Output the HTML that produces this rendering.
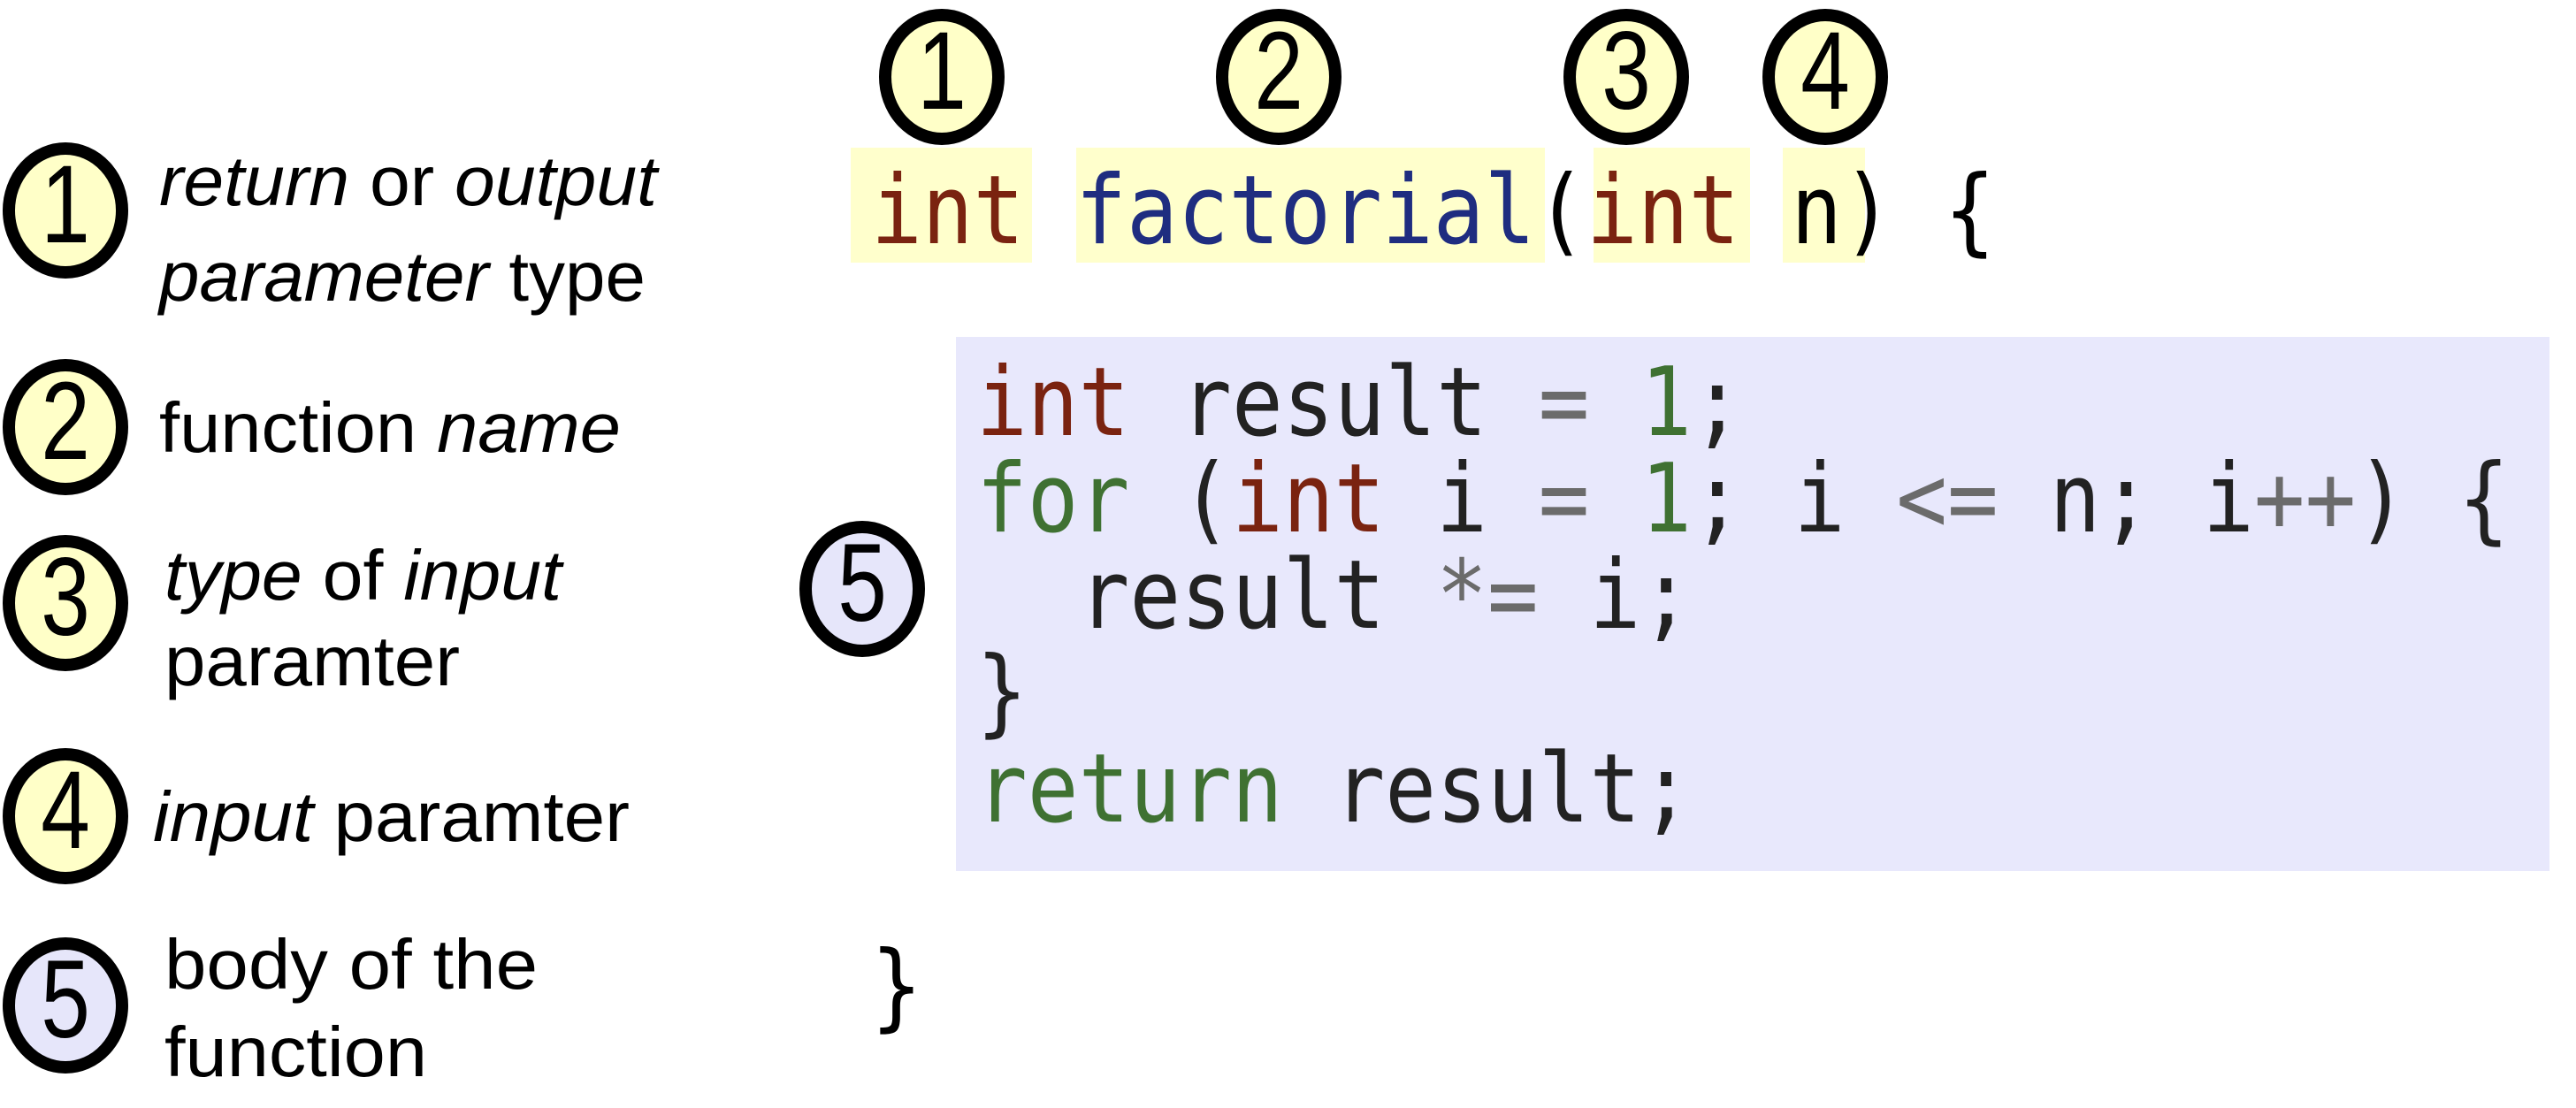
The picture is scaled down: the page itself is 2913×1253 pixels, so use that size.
<!DOCTYPE html>
<html><head><meta charset="utf-8"><style>
html,body{margin:0;padding:0;background:#fff;width:2913px;height:1253px;overflow:hidden}
svg{display:block}
.s{font-family:"Liberation Sans",Arial,sans-serif;font-size:80px;fill:#000}
.d{font-family:"Liberation Sans",Arial,sans-serif;font-size:100px;fill:#000;text-anchor:middle}
.m{font-family:"DejaVu Sans Mono","Liberation Mono",monospace;font-size:96px;white-space:pre}
.k{fill:#7a2310}.f{fill:#1f2d80}.g{fill:#3f7132}.o{fill:#6b6b6b}.t{fill:#222}.b{fill:#000}
</style></head><body>
<svg width="2913" height="1253" viewBox="0 0 2913 1253" xmlns="http://www.w3.org/2000/svg">
<rect x="962" y="167" width="205" height="130" fill="#ffffcc"/>
<rect x="1217" y="167" width="530" height="130" fill="#ffffcc"/>
<rect x="1802" y="167" width="177" height="130" fill="#ffffcc"/>
<rect x="2016" y="167" width="93" height="130" fill="#ffffcc"/>
<rect x="1081" y="381" width="1802" height="604" fill="#e8e8fc"/>

<g stroke="#000" stroke-width="14" fill="#ffffc8">
<ellipse cx="1065" cy="87" rx="64" ry="70"/>
<ellipse cx="1446" cy="87" rx="64" ry="70"/>
<ellipse cx="1839" cy="87" rx="64" ry="70"/>
<ellipse cx="2064" cy="87" rx="64" ry="70"/>
<ellipse cx="74" cy="238" rx="64" ry="70"/>
<ellipse cx="74" cy="483" rx="64" ry="70"/>
<ellipse cx="74" cy="682" rx="64" ry="70"/>
<ellipse cx="74" cy="923" rx="64" ry="70"/>
<ellipse cx="74" cy="1137" rx="64" ry="70" fill="#e6e6fa"/>
<ellipse cx="975" cy="666" rx="64" ry="70" fill="#e6e6fa"/>
</g>
<g class="d">
<text transform="translate(1065,123) scale(1,1.25)">1</text>
<text transform="translate(1446,123) scale(1,1.25)">2</text>
<text transform="translate(1839,123) scale(1,1.25)">3</text>
<text transform="translate(2064,123) scale(1,1.25)">4</text>
<text transform="translate(74,274) scale(1,1.25)">1</text>
<text transform="translate(74,519) scale(1,1.25)">2</text>
<text transform="translate(74,718) scale(1,1.25)">3</text>
<text transform="translate(74,959) scale(1,1.25)">4</text>
<text transform="translate(74,1173) scale(1,1.25)">5</text>
<text transform="translate(975,702) scale(1,1.25)">5</text>
</g>

<text class="s" x="180" y="232" textLength="563" lengthAdjust="spacingAndGlyphs"><tspan font-style="italic">return</tspan> or <tspan font-style="italic">output</tspan></text>
<text class="s" x="180" y="340" textLength="550" lengthAdjust="spacingAndGlyphs"><tspan font-style="italic">parameter</tspan> type</text>
<text class="s" x="180" y="511" textLength="522" lengthAdjust="spacingAndGlyphs">function <tspan font-style="italic">name</tspan></text>
<text class="s" x="186" y="678" textLength="449" lengthAdjust="spacingAndGlyphs"><tspan font-style="italic">type</tspan> of <tspan font-style="italic">input</tspan></text>
<text class="s" x="186" y="775" textLength="334" lengthAdjust="spacingAndGlyphs">paramter</text>
<text class="s" x="173" y="951" textLength="539" lengthAdjust="spacingAndGlyphs"><tspan font-style="italic">input</tspan> paramter</text>
<text class="s" x="186" y="1118" textLength="422" lengthAdjust="spacingAndGlyphs">body of the</text>
<text class="s" x="186" y="1217" textLength="297" lengthAdjust="spacingAndGlyphs">function</text>

<text class="m" transform="translate(985,275) scale(1,1.12)" xml:space="preserve"><tspan class="k">int</tspan><tspan class="b"> </tspan><tspan class="f">factorial</tspan><tspan class="b">(</tspan><tspan class="k">int</tspan><tspan class="b"> n) {</tspan></text>
<text class="m" transform="translate(1104,492) scale(1,1.12)" xml:space="preserve"><tspan class="k">int</tspan><tspan class="t"> result </tspan><tspan class="o">=</tspan><tspan class="t"> </tspan><tspan class="g">1</tspan><tspan class="t">;</tspan></text>
<text class="m" transform="translate(1104,601) scale(1,1.12)" xml:space="preserve"><tspan class="g">for</tspan><tspan class="t"> (</tspan><tspan class="k">int</tspan><tspan class="t"> i </tspan><tspan class="o">=</tspan><tspan class="t"> </tspan><tspan class="g">1</tspan><tspan class="t">; i </tspan><tspan class="o">&lt;=</tspan><tspan class="t"> n; i</tspan><tspan class="o">++</tspan><tspan class="t">) {</tspan></text>
<text class="m" transform="translate(1104,710) scale(1,1.12)" xml:space="preserve"><tspan class="t">  result </tspan><tspan class="o">*=</tspan><tspan class="t"> i;</tspan></text>
<text class="m t" transform="translate(1104,819) scale(1,1.12)">}</text>
<text class="m" transform="translate(1104,929) scale(1,1.12)" xml:space="preserve"><tspan class="g">return</tspan><tspan class="t"> result;</tspan></text>
<text class="m b" transform="translate(985,1152) scale(1,1.12)">}</text>
</svg>
</body></html>
